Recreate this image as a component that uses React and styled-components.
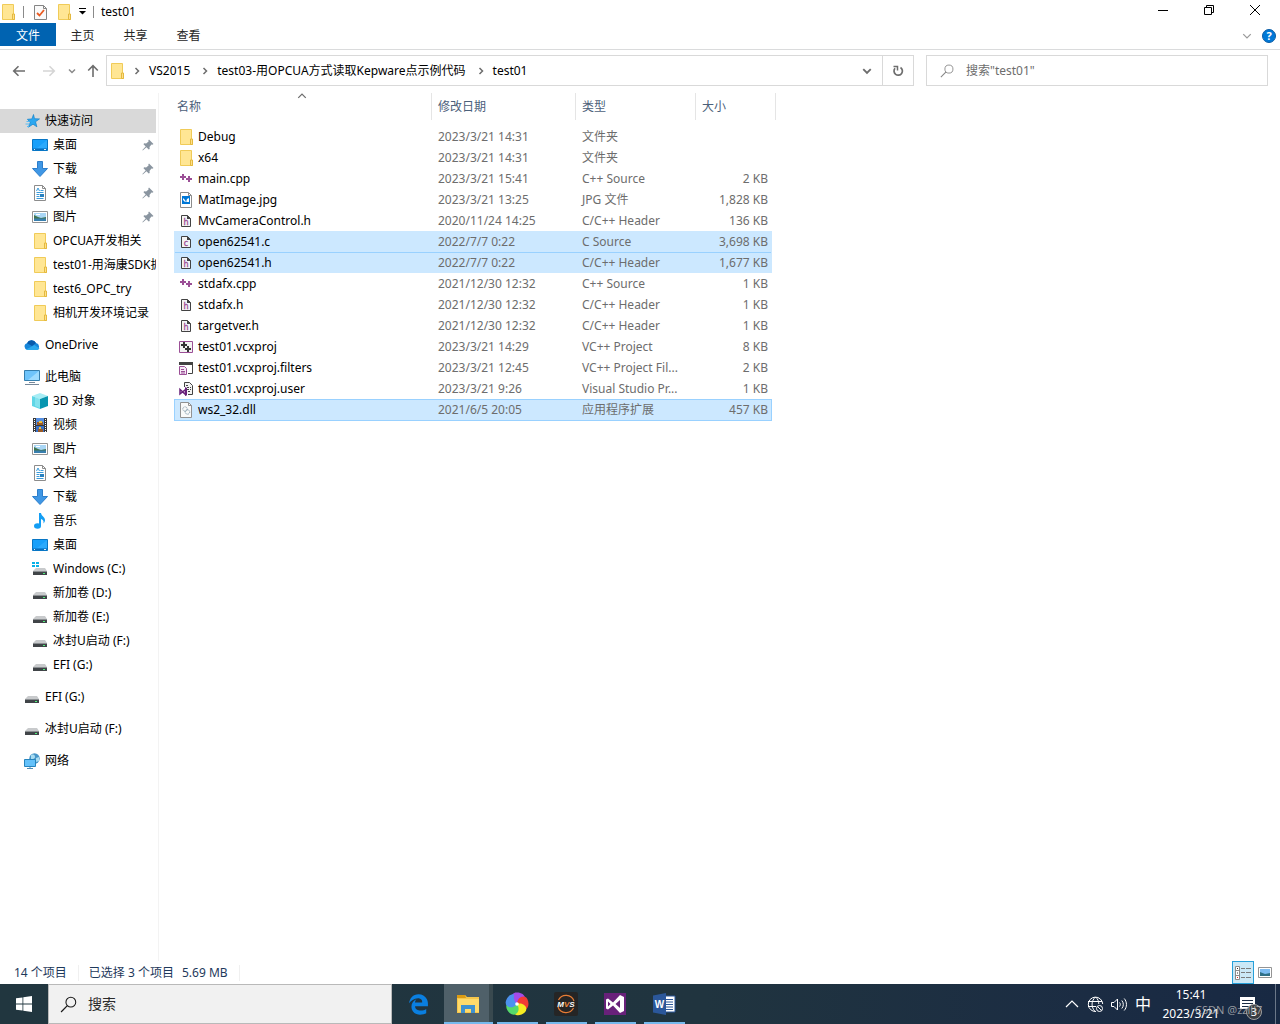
import React, { useState } from "react";
import styled, { createGlobalStyle } from "styled-components";
import { FaEdgeLegacy } from "react-icons/fa6";

const GlobalStyle = createGlobalStyle`
  * {
    box-sizing: border-box;
  }
  body {
    margin: 0;
    background: #fff;
    color: #000;
    font-family: "Noto Sans", "Noto Sans CJK SC", sans-serif;
    font-size: 12px;
    line-height: 16px;
  }
  button, input {
    font: inherit;
    color: inherit;
    background: none;
    border: 0;
    padding: 0;
    margin: 0;
  }
  a {
    color: inherit;
    text-decoration: none;
  }
  svg {
    display: block;
    flex: none;
  }
`;

const Page = styled.div`
  min-height: 100vh;
  display: flex;
  flex-direction: column;
`;

const TitleBar = styled.header`
  height: 23px;
  display: flex;
  align-items: center;
  padding-right: 2px;
`;

const QuickTools = styled.div`
  display: flex;
  align-items: center;
  gap: 7px;
  padding-right: 7px;
`;

const ToolButton = styled.button`
  display: flex;
  align-items: center;
  justify-content: center;
`;

const Divider = styled.span`
  width: 1px;
  height: 12px;
  background: #8a8a8a;
`;

const WindowTitle = styled.h1`
  flex: 1;
  margin: 0;
  font-size: 12px;
  font-weight: 400;
`;

const WindowButton = styled.button`
  width: 46px;
  height: 20px;
  display: flex;
  align-items: center;
  justify-content: center;
  align-self: flex-start;
`;

const Ribbon = styled.nav`
  display: flex;
  height: 27px;
  padding-bottom: 3px;
  border-bottom: 1px solid #dadbdc;
`;

const RibbonTab = styled.button`
  width: ${p => (p.$file ? 56 : 53)}px;
  padding-top: 2px;
  color: ${p => (p.$file ? "#fff" : "#262626")};
  background: ${p => (p.$file ? "#0063b1" : "none")};
`;

const RibbonEnd = styled.div`
  display: flex;
  align-items: center;
  gap: 10px;
  margin-left: auto;
  padding: 2px 4px 0 0;
`;

const AddressRow = styled.div`
  display: flex;
  align-items: center;
  padding: 5px 12px 7px 4px;
`;

const NavButtons = styled.div`
  display: grid;
  grid-template-columns: 30px 30px 16px 26px;
  align-items: center;
`;

const AddressBox = styled.div`
  flex: 1;
  min-width: 0;
  height: 31px;
  display: flex;
  align-items: center;
  border: 1px solid #d9d9d9;
`;

const Crumbs = styled.div`
  flex: 1;
  min-width: 0;
  display: flex;
  align-items: center;
  gap: 8px;
  padding-left: 2px;
  white-space: nowrap;
  overflow: hidden;
  a {
    padding-right: 3px;
  }
`;

const AddressButton = styled.button`
  width: 31px;
  height: 29px;
  display: flex;
  align-items: center;
  justify-content: center;
  border-left: 1px solid ${p => (p.$line ? "#d9d9d9" : "transparent")};
`;

const SearchBox = styled.label`
  width: 342px;
  height: 31px;
  margin-left: 12px;
  padding: 0 13px;
  display: flex;
  align-items: center;
  gap: 12px;
  border: 1px solid #d9d9d9;
  input {
    flex: 1;
    min-width: 0;
    outline: none;
  }
  input::placeholder {
    color: #6d6d6d;
    opacity: 1;
  }
`;

const Body = styled.div`
  flex: 1;
  display: flex;
`;

const Sidebar = styled.nav`
  width: 159px;
  flex: none;
  padding: 16px 2px 0 0;
  border-right: 1px solid #f3f3f3;
`;

const Group = styled.div`
  margin-bottom: 8px;
`;

const SideItem = styled.a`
  display: flex;
  align-items: center;
  gap: 5px;
  height: 24px;
  padding-left: ${p => (p.$child ? 32 : 24)}px;
  padding-right: ${p => (p.$pinned ? 2 : 0)}px;
  background: ${p => (p.$active ? "#d9d9d9" : "none")};
  &:hover {
    background: ${p => (p.$active ? "#d9d9d9" : "#e5f3ff")};
  }
`;

const SideLabel = styled.span`
  flex: 1;
  min-width: 0;
  overflow: hidden;
  white-space: nowrap;
`;

const Content = styled.main`
  flex: 1;
  min-width: 0;
  padding-left: 15px;
`;

const FileTable = styled.table`
  width: 602px;
  table-layout: fixed;
  border-collapse: separate;
  border-spacing: 0;
`;

const HeadCell = styled.th`
  height: 27px;
  padding: 0 6px 0 ${p => (p.$first ? 3 : 6)}px;
  border-right: 1px solid #e5e5e5;
  text-align: left;
  font-weight: 400;
  color: #4c607a;
`;

const SortMark = styled.span`
  position: absolute;
  top: -8px;
  left: 120px;
`;

const HeadButton = styled.button`
  position: relative;
`;

const Spacer = styled.tr`
  height: 6px;
`;

const FileRow = styled.tr`
  height: 21px;
  cursor: default;
  td {
    padding: 0 3px 0 6px;
    color: #6d6d6d;
    white-space: nowrap;
    overflow: hidden;
  }
  td:first-child {
    padding-left: 4px;
    color: #000;
  }
  td:nth-child(4) {
    text-align: right;
  }
  td:not(:last-child) {
    background: ${p => (p.$selected ? "#cce8ff" : "none")};
    box-shadow: ${p =>
      p.$focused
        ? "inset 0 1px #99d1ff, 0 1px #99d1ff"
        : p.$joined
        ? "inset 0 1px #99d1ff"
        : "none"};
  }
  td:first-child {
    border-left: 1px solid ${p => (p.$focused ? "#99d1ff" : "transparent")};
  }
  td:nth-child(4) {
    border-right: 1px solid ${p => (p.$focused ? "#99d1ff" : "transparent")};
  }
`;

const FileName = styled.span`
  display: flex;
  align-items: center;
  gap: 5px;
`;

const FileIcon = styled.span`
  width: 14px;
  display: flex;
  justify-content: center;
`;

const StatusBar = styled.footer`
  height: 23px;
  display: flex;
  align-items: center;
  padding-left: 14px;
  color: #1e395b;
`;

const StatusText = styled.span`
  display: flex;
  gap: 8px;
  padding-right: 11px;
  margin-right: 10px;
  border-right: 1px solid #f0f0f0;
`;

const ViewButtons = styled.div`
  display: flex;
  margin-left: auto;
  padding-right: 4px;
`;

const ViewButton = styled.button`
  width: 22px;
  height: 23px;
  display: flex;
  align-items: center;
  justify-content: center;
  border: 1px solid ${p => (p.$on ? "#26a0da" : "transparent")};
  background: ${p => (p.$on ? "#cbe8f6" : "none")};
`;

const Taskbar = styled.footer`
  height: 40px;
  display: flex;
  background: linear-gradient(90deg, #21363f 0%, #20343f 55%, #1b2c43 85%, #182943 100%);
  color: #fff;
`;

const StartButton = styled.button`
  width: 48px;
  display: flex;
  align-items: center;
  justify-content: center;
`;

const TaskSearch = styled.label`
  width: 344px;
  display: flex;
  align-items: center;
  gap: 11px;
  padding-left: 11px;
  background: #f1f1f1;
  border: 1px solid #b9b9b9;
  color: #1a1a1a;
  font-size: 14px;
  input {
    flex: 1;
    min-width: 0;
    outline: none;
  }
  input::placeholder {
    color: #2b2b2b;
    opacity: 1;
  }
`;

const Apps = styled.div`
  display: flex;
  padding-left: 3px;
`;

const AppButton = styled.button`
  width: 49px;
  padding: 0 ${p => (p.$active ? 0 : 4)}px;
  display: flex;
  flex-direction: column;
  align-items: center;
  background: ${p => (p.$active ? "linear-gradient(90deg, #4f6069 45px, #39494f 45px)" : "none")};
  &::after {
    content: "";
    width: 100%;
    height: 2px;
    background: ${p => (p.$running ? "#76b9ed" : "none")};
  }
`;

const AppIcon = styled.span`
  flex: 1;
  display: flex;
  align-items: center;
  padding: 2px 2px 0 0;
`;

const Tray = styled.div`
  margin-left: auto;
  display: flex;
  align-items: center;
  gap: 7px;
`;

const TrayButton = styled.button`
  position: relative;
  display: flex;
  align-items: center;
  justify-content: center;
  font-size: 16px;
`;

const Clock = styled.button`
  position: relative;
  z-index: 1;
  width: 66px;
  margin-right: 8px;
  line-height: 19px;
  span {
    display: block;
  }
`;

const Watermark = styled.span`
  position: absolute;
  left: 37px;
  bottom: 4px;
  font-size: 11px;
  line-height: 19px;
  color: rgba(190, 190, 190, 0.75);
  white-space: nowrap;
  pointer-events: none;
`;

const Badge = styled.span`
  position: absolute;
  left: 7px;
  top: 8px;
  width: 16px;
  height: 16px;
  border: 1px solid #a0a0a0;
  border-radius: 50%;
  background: #3a3d42;
  font-size: 11px;
  line-height: 14px;
`;

const ShowDesktop = styled.button`
  width: 5px;
  height: 40px;
  margin-left: 12px;
  border-left: 1px solid #6b7788;
`;

const Icon = ({ size = 16, box = 16, children }) => (
  <svg width={size} height={size} viewBox={`0 0 ${box} ${box}`} fill="none" aria-hidden="true">
    {children}
  </svg>
);

const Folder = () => (
  <Icon>
    <path d="M2.500.5h11v11l1 1v3h-12z" fill="#ffe694" stroke="#f0cb58" />
    <path d="M12.500 10v5.500h2V10z" fill="#ffe08a" stroke="#e4b93f" />
  </Icon>
);

const Chevron = ({ dir = "right", color = "#6d6d6d", size = 8, width = 1.5 }) => {
  const paths = { right: "M2.500 1l3 3-3 3", down: "M1 2.500l3 3 3-3", up: "M1 5.500l3-3 3 3" };
  return (
    <Icon size={size} box={8}>
      <path d={paths[dir]} stroke={color} strokeWidth={width} />
    </Icon>
  );
};

const Arrow = ({ dir, color }) => (
  <Icon size={14} box={14}>
    <path
      d={{ left: "M13 7H2M6.500 2.200L1.700 7l4.800 4.800", right: "M1 7h11M7.500 2.200L12.300 7l-4.800 4.800", up: "M7 13V2M2.200 6.500L7 1.700l4.800 4.800" }[dir]}
      stroke={color}
      strokeWidth="1.600"
    />
  </Icon>
);

const Magnifier = ({ size, color }) => (
  <Icon size={size}>
    <circle cx="10.200" cy="5.800" r="4.600" stroke={color} />
    <path d="M6.900 9.100L1 15" stroke={color} strokeWidth="1.200" />
  </Icon>
);

const Star = () => (
  <Icon>
    <path d="M9.500 1.500l1 4.200 5 .2-4 2.900 1.400 5L9 11.200l-4.600 3 1.800-4.800-2.800-3.100 4.500-.4z" fill="#2ca7f0" stroke="#1482ca" strokeWidth=".7" />
    <path d="M2.500 8.500h3M1.500 11h4M3 13.500h2" stroke="#5bbcf4" />
  </Icon>
);

const Desktop = () => (
  <Icon>
    <path d="M.5 2.500h15v11H.5z" fill="#18a0fb" stroke="#0876c5" />
    <path d="M1 11.500h14v1.500H1z" fill="#0b6fbd" />
    <path d="M2 12.500h1M12 12.500h2" stroke="#d9f0ff" />
    <path d="M15 3v8H5z" fill="#39b1ff" opacity=".6" />
  </Icon>
);

const Download = () => (
  <Icon>
    <path d="M5.500.5h5v7h5L8 15.500.5 7.500h5z" fill="#3f97e5" stroke="#2c7ecb" />
  </Icon>
);

const Document = () => (
  <Icon>
    <path d="M2.500.5h8l3 3v12h-11z" fill="#fff" stroke="#8c8c8c" />
    <path d="M10.500.5v3h3" stroke="#8c8c8c" />
    <path d="M4.500 6l1.500-3 1.500 3M8.500 5.500h3M4.500 7.500h7M4.500 9.500h3M4.500 11.500h3M4.500 13.500h7" stroke="#3a9bdb" />
    <path d="M8 9h4v3H8z" fill="#2780bf" />
  </Icon>
);

const Picture = () => (
  <Icon>
    <path d="M.5 2.500h15v11H.5z" fill="#fff" stroke="#949494" />
    <path d="M2 4h12v8H2z" fill="#a9d6f5" />
    <path d="M2 6l4 2 3 1 5-1v2H2z" fill="#417450" />
    <path d="M2 9.500h12V12H2z" fill="#397fae" />
    <path d="M4 5h4v1H4z" fill="#fff" />
  </Icon>
);

const Cloud = () => (
  <Icon>
    <path d="M3.500 13A3.500 3.500 0 0 1 3 6.200 5 5 0 0 1 12 6a3.700 3.700 0 0 1 1 7z" fill="#1686d9" />
    <path d="M3 6.200A5 5 0 0 1 12 6l-4 3z" fill="#075aab" />
    <path d="M2 12.500L10.500 8l5 3.500A3 3 0 0 1 13 13H3.500z" fill="#2aa9ed" />
  </Icon>
);

const Computer = () => (
  <Icon>
    <path d="M.5 1.500h15v10H.5z" fill="#6ec4fb" stroke="#357fae" />
    <path d="M15 2v9H4z" fill="#9cdbff" />
    <path d="M5 13.500h6M1 15.500h14" stroke="#76889a" />
  </Icon>
);

const Cube = () => (
  <Icon>
    <path d="M8 0l8 3-8 3-8-3z" fill="#a8edf5" />
    <path d="M0 3l8 3v10l-8-3z" fill="#5fd6e6" />
    <path d="M16 3L8 6v10l8-3z" fill="#0795af" />
    <path d="M3 2l5-1 5 1.500L8 6v9l-5-2z" fill="#a5edf5" opacity=".5" />
  </Icon>
);

const Film = () => (
  <Icon>
    <path d="M1 1h14v14H1z" fill="#383838" />
    <path d="M4 1h8v7H4z" fill="#568fe2" />
    <path d="M4 9h8v6H4z" fill="#3770c9" />
    <path d="M5 5h6v3H5zM6 12h5v3H6z" fill="#9b5b27" />
    <path d="M7 4h3v2H7zM7 10h2v2H7z" fill="#edc23b" />
    <path d="M2.500 2v13M13.500 2v13" stroke="#fff" strokeDasharray="1 1" />
  </Icon>
);

const Music = () => (
  <Icon>
    <ellipse cx="5.500" cy="13" rx="3.500" ry="2.700" fill="#139ef4" />
    <path d="M7 0h2c.3 3 4 3.800 4 7 0 1.600-.7 2.700-1.500 3.500.5-3-1-4-2.500-4.500v7H7z" fill="#139ef4" />
  </Icon>
);

const Drive = ({ windows }) => (
  <Icon>
    {windows && <path d="M0 1h3v2H0zm4 0h3v2H4zM0 4h3v2H0zm4 0h3v2H4z" fill="#08b1e8" />}
    <path d="M4 7h9l2 3H1z" fill="#c8cacc" />
    <path d="M1 10h14v4H1z" fill="#404448" />
    <path d="M1 10h14v1H1z" fill="#8b8f92" />
    <path d="M11 12h2v1h-2z" fill="#4ff27a" />
  </Icon>
);

const Network = () => (
  <Icon>
    <circle cx="10.500" cy="5.500" r="5.200" fill="#4896c8" />
    <path d="M7 2c3-1 4 0 4 2S8 6 7 8zM12 5l3-1v4l-3 1z" fill="#a8dcf1" />
    <path d="M.5 6.500h11v7H.5z" fill="#63c1fa" stroke="#2684bd" />
    <path d="M6 14v1.500M3 15.500h6" stroke="#4f8db4" />
  </Icon>
);

const Pin = () => (
  <Icon size={12} box={12}>
    <path d="M7 .5L11.500 5l-1.200.7-.9-.3L7.500 8l.2 2-1 .5L4.400 8.200.8 11.500l-.4-.4 3.300-3.600L1.500 5.200l.6-.9 2 .2L6.600 2.600l-.3-1z" fill="#8a95a0" />
  </Icon>
);

const Cpp = () => (
  <Icon size={14} box={14}>
    <path d="M4 2v6M1 5h6M10 4v6M7 7h6" stroke="#9b4f96" strokeWidth="2" />
  </Icon>
);

const Jpg = () => (
  <Icon>
    <path d="M2.500.5h8l3 3v12h-11z" fill="#fff" stroke="#8c8c8c" />
    <path d="M4 4h8v8H4z" fill="#0078d7" />
    <path d="M5 6l2 2 1 2 1-3 2-1v4H9l-1-1-1 1-2-2z" fill="#fff" />
    <path d="M10.500.5v3h3" stroke="#8c8c8c" />
  </Icon>
);

const Source = ({ letter }) => (
  <Icon size={14} box={14}>
    <path d="M2.500 1.500h6l3 3v8h-9z" fill="#f4f4f4" stroke="#424242" />
    <path d="M8 1l4 4H8z" fill="#424242" />
    <text x="7" y="11" textAnchor="middle" fontSize="8" fontFamily="DejaVu Sans" fill="#9b4f96" stroke="#9b4f96" strokeWidth=".3">{letter}</text>
  </Icon>
);

const Project = () => (
  <Icon size={14} box={14}>
    <path d="M.5 1.500h13v11H.5z" fill="#f3f3f3" stroke="#9b4f96" />
    <path d="M5 2v6M2 5h6M9 6v6M6 9h6" stroke="#333" strokeWidth="2" />
  </Icon>
);

const Filters = () => (
  <Icon size={14} box={14}>
    <path d="M0 1h14v3H0z" fill="#424242" />
    <path d="M13.500 4v8.500H9" stroke="#424242" />
    <path d="M.5 5.500h5l2 2v6h-7z" fill="#f5eaf5" stroke="#9b4f96" />
    <path d="M2 8.500h3M2 10.500h4M2 12h4" stroke="#9b4f96" />
  </Icon>
);

const UserFile = () => (
  <Icon size={14} box={14}>
    <path d="M5.500 5V.5h5l3 3v9H9" fill="#f3f3f3" stroke="#424242" />
    <path d="M7 3.500h2M8 5.500h4M8 7.500h4M9 9.500h3" stroke="#424242" strokeDasharray="2 1" />
    <path d="M1 7.500v4.500l5.500-4.500v5z" stroke="#68217a" strokeWidth="1.500" />
    <path d="M6 5l2 1v7l-2 1z" fill="#68217a" />
  </Icon>
);

const Dll = () => (
  <Icon>
    <path d="M2.500.5h8l3 3v12h-11z" fill="#f9f9f9" stroke="#929292" />
    <path d="M10.500.5v3h3" stroke="#929292" />
    <circle cx="7" cy="7" r="2.200" stroke="#8ca0ad" strokeDasharray="1 .5" />
    <circle cx="9.500" cy="10" r="2.200" stroke="#7d98aa" strokeDasharray="1 .5" />
  </Icon>
);

const fileIcons = {
  folder: <Folder />,
  cpp: <Cpp />,
  jpg: <Jpg />,
  h: <Source letter="h" />,
  c: <Source letter="c" />,
  project: <Project />,
  filters: <Filters />,
  user: <UserFile />,
  dll: <Dll />,
};

const files = [
  ["folder", "Debug", "2023/3/21 14:31", "文件夹", ""],
  ["folder", "x64", "2023/3/21 14:31", "文件夹", ""],
  ["cpp", "main.cpp", "2023/3/21 15:41", "C++ Source", "2 KB"],
  ["jpg", "MatImage.jpg", "2023/3/21 13:25", "JPG 文件", "1,828 KB"],
  ["h", "MvCameraControl.h", "2020/11/24 14:25", "C/C++ Header", "136 KB"],
  ["c", "open62541.c", "2022/7/7 0:22", "C Source", "3,698 KB"],
  ["h", "open62541.h", "2022/7/7 0:22", "C/C++ Header", "1,677 KB"],
  ["cpp", "stdafx.cpp", "2021/12/30 12:32", "C++ Source", "1 KB"],
  ["h", "stdafx.h", "2021/12/30 12:32", "C/C++ Header", "1 KB"],
  ["h", "targetver.h", "2021/12/30 12:32", "C/C++ Header", "1 KB"],
  ["project", "test01.vcxproj", "2023/3/21 14:29", "VC++ Project", "8 KB"],
  ["filters", "test01.vcxproj.filters", "2023/3/21 12:45", "VC++ Project Fil...", "2 KB"],
  ["user", "test01.vcxproj.user", "2023/3/21 9:26", "Visual Studio Pr...", "1 KB"],
  ["dll", "ws2_32.dll", "2021/6/5 20:05", "应用程序扩展", "457 KB"],
];

// the first entry of each group is its root, the rest are indented
const groups = [
  [
    [<Star />, "快速访问"],
    [<Desktop />, "桌面", true],
    [<Download />, "下载", true],
    [<Document />, "文档", true],
    [<Picture />, "图片", true],
    [<Folder />, "OPCUA开发相关"],
    [<Folder />, "test01-用海康SDK抓"],
    [<Folder />, "test6_OPC_try"],
    [<Folder />, "相机开发环境记录"],
  ],
  [[<Cloud />, "OneDrive"]],
  [
    [<Computer />, "此电脑"],
    [<Cube />, "3D 对象"],
    [<Film />, "视频"],
    [<Picture />, "图片"],
    [<Document />, "文档"],
    [<Download />, "下载"],
    [<Music />, "音乐"],
    [<Desktop />, "桌面"],
    [<Drive windows />, "Windows (C:)"],
    [<Drive />, "新加卷 (D:)"],
    [<Drive />, "新加卷 (E:)"],
    [<Drive />, "冰封U启动 (F:)"],
    [<Drive />, "EFI (G:)"],
  ],
  [[<Drive />, "EFI (G:)"]],
  [[<Drive />, "冰封U启动 (F:)"]],
  [[<Network />, "网络"]],
];

const ExplorerLogo = () => (
  <Icon size={24} box={24}>
    <path d="M1 3h8l2 2h12v16H1z" fill="#f7c64b" />
    <path d="M1 3h8l1 3H1z" fill="#dc9b13" />
    <path d="M2 7h21v13H2z" fill="#ffda6b" />
    <path d="M5 13h14v8h-4v-4H9v4H5z" fill="#3f91d0" />
  </Icon>
);

const petals = ["#a34bea", "#f23b35", "#f6ec22", "#56d96b", "#4c91ee"];

const Pinwheel = () => (
  <Icon size={24} box={24}>
    {petals.map((color, i) => (
      <path key={color} d="M12 12C6 9 6 1 12 .5c5 0 9 3 9 7-2 0-6 0-9 4.500z" fill={color} transform={`rotate(${i * 72 - 8} 12 12)`} />
    ))}
    <circle cx="12" cy="12" r="1.800" fill="#fff" />
  </Icon>
);

const MvsLogo = () => (
  <Icon size={24} box={24}>
    <rect width="24" height="24" rx="2" fill="#252525" />
    <path d="M4.500 8a8.500 8.500 0 0 1 15.500 1M19.500 16A8.500 8.500 0 0 1 4 15" stroke="#e77c35" strokeWidth="1.200" />
    <text x="12" y="15" textAnchor="middle" fontSize="8" fontStyle="italic" fontWeight="700" fontFamily="Liberation Sans" fill="#fff">
      <tspan fill="#fff">M</tspan><tspan fill="#f08a3c">V</tspan><tspan>S</tspan>
    </text>
  </Icon>
);

const StudioLogo = () => (
  <Icon size={24} box={24}>
    <path d="M1 1h22v22H1z" fill="#68217a" />
    <path d="M3 7.500l2-1 5 4L17 3l4 2v14l-4 2-7-7.500-5 4-2-1zM5 9.500v5L7.500 12zM17 8l-4.500 4 4.500 4z" fill="#fff" fillRule="evenodd" />
  </Icon>
);

const WordLogo = () => (
  <Icon size={24} box={24}>
    <path d="M13 4h10v16H13z" fill="#fff" stroke="#2b579a" />
    <path d="M14 7.500h7M14 10h7M14 12.500h7M14 15h7M14 17.500h7" stroke="#2b579a" />
    <path d="M1 3.500L14 1v22L1 20.500z" fill="#2b579a" />
    <text x="7.500" y="16" textAnchor="middle" fontSize="10" fontWeight="700" fontFamily="Liberation Sans" fill="#fff">W</text>
  </Icon>
);

const apps = [
  ["Edge", <FaEdgeLegacy size={21} color="#0a7fe0" />, false],
  ["文件资源管理器", <ExplorerLogo />, true],
  ["浏览器", <Pinwheel />, true],
  ["MVS", <MvsLogo />, true],
  ["Visual Studio", <StudioLogo />, true],
  ["Word", <WordLogo />, true],
];

export default function App() {
  const [selected, setSelected] = useState([5, 6, 13]);
  const [focused, setFocused] = useState(13);

  const pick = i => {
    setSelected([i]);
    setFocused(i);
  };

  return (
    <Page>
      <GlobalStyle />
      <TitleBar>
        <QuickTools>
          <ToolButton aria-label="窗口菜单"><Folder /></ToolButton>
          <Divider />
          <ToolButton aria-label="属性">
            <Icon size={18} box={18}>
              <path d="M3.500 2.500h9l3 3v11h-12z" fill="#fafafa" stroke="#858585" />
              <path d="M12.500 2.500v3h3" stroke="#858585" />
              <path d="M6 10l2.500 2.500L13 7" stroke="#ea5b22" strokeWidth="1.800" />
            </Icon>
          </ToolButton>
          <ToolButton aria-label="新建文件夹"><Folder /></ToolButton>
          <ToolButton aria-label="自定义快速访问工具栏">
            <Icon size={7} box={7}><path d="M0 .5h7" stroke="#000" /><path d="M0 3h7L3.500 6.500z" fill="#000" /></Icon>
          </ToolButton>
          <Divider />
        </QuickTools>
        <WindowTitle>test01</WindowTitle>
        <WindowButton aria-label="最小化"><Icon size={10} box={10}><path d="M0 5.500h10" stroke="#000" /></Icon></WindowButton>
        <WindowButton aria-label="还原">
          <Icon size={10} box={10}><path d="M.5 2.500h7v7h-7zM2.500 2.500v-2h7v7h-2" stroke="#000" /></Icon>
        </WindowButton>
        <WindowButton aria-label="关闭"><Icon size={10} box={10}><path d="M0 0l10 10M10 0L0 10" stroke="#000" /></Icon></WindowButton>
      </TitleBar>

      <Ribbon>
        <RibbonTab $file>文件</RibbonTab>
        <RibbonTab>主页</RibbonTab>
        <RibbonTab>共享</RibbonTab>
        <RibbonTab>查看</RibbonTab>
        <RibbonEnd>
          <ToolButton aria-label="展开功能区"><Chevron dir="down" color="#9a9a9a" size={10} width={1} /></ToolButton>
          <ToolButton aria-label="帮助">
            <Icon size={14} box={14}>
              <circle cx="7" cy="7" r="6.500" fill="#0078d7" stroke="#0c5da5" />
              <text x="7" y="11" textAnchor="middle" fontSize="11" fontWeight="700" fill="#fff">?</text>
            </Icon>
          </ToolButton>
        </RibbonEnd>
      </Ribbon>

      <AddressRow>
        <NavButtons>
          <ToolButton aria-label="后退"><Arrow dir="left" color="#6d6d6d" /></ToolButton>
          <ToolButton aria-label="前进" disabled><Arrow dir="right" color="#d5d5d5" /></ToolButton>
          <ToolButton aria-label="最近浏览的位置"><Chevron dir="down" color="#8a8a8a" /></ToolButton>
          <ToolButton aria-label="上移"><Arrow dir="up" color="#6d6d6d" /></ToolButton>
        </NavButtons>
        <AddressBox>
          <Crumbs>
            <Folder />
            <Chevron />
            <a href="#vs2015">VS2015</a>
            <Chevron />
            <a href="#test03">test03-用OPCUA方式读取Kepware点示例代码</a>
            <Chevron />
            <a href="#test01">test01</a>
          </Crumbs>
          <AddressButton aria-label="以前的位置"><Chevron dir="down" size={10} width={1.5} /></AddressButton>
          <AddressButton $line aria-label="刷新">
            <Icon size={12} box={12}>
              <path d="M8.500 2.500A4.200 4.200 0 1 1 3 3.300" stroke="#6d6d6d" strokeWidth="1.700" />
              <path d="M1.500 1.500h4v4" stroke="#6d6d6d" strokeWidth="1.500" />
            </Icon>
          </AddressButton>
        </AddressBox>
        <SearchBox>
          <Magnifier size={14} color="#868686" />
          <input type="text" aria-label="搜索 test01" placeholder={'搜索"test01"'} />
        </SearchBox>
      </AddressRow>

      <Body>
        <Sidebar>
          {groups.map((items, g) => (
            <Group key={g}>
              {items.map(([icon, label, pinned], i) => (
                <SideItem key={label} href={`#g${g}-${i}`} $child={i > 0} $pinned={pinned} $active={g === 0 && i === 0}>
                  {icon}
                  <SideLabel>{label}</SideLabel>
                  {pinned && <Pin />}
                </SideItem>
              ))}
            </Group>
          ))}
        </Sidebar>
        <Content>
          <FileTable>
            <colgroup>
              <col style={{ width: 258 }} />
              <col style={{ width: 144 }} />
              <col style={{ width: 120 }} />
              <col style={{ width: 76 }} />
              <col style={{ width: 4 }} />
            </colgroup>
            <thead>
              <tr>
                <HeadCell $first>
                  <HeadButton>
                    名称
                    <SortMark><Chevron dir="up" size={10} width={1} /></SortMark>
                  </HeadButton>
                </HeadCell>
                <HeadCell><HeadButton>修改日期</HeadButton></HeadCell>
                <HeadCell><HeadButton>类型</HeadButton></HeadCell>
                <HeadCell colSpan={2}><HeadButton>大小</HeadButton></HeadCell>
              </tr>
            </thead>
            <tbody>
              <Spacer aria-hidden="true" />
              {files.map(([kind, name, date, type, size], i) => (
                <FileRow
                  key={name}
                  $selected={selected.includes(i)}
                  $joined={selected.includes(i) && selected.includes(i - 1)}
                  $focused={focused === i}
                  onClick={() => pick(i)}
                >
                  <td><FileName><FileIcon>{fileIcons[kind]}</FileIcon>{name}</FileName></td>
                  <td>{date}</td>
                  <td>{type}</td>
                  <td>{size}</td>
                  <td />
                </FileRow>
              ))}
            </tbody>
          </FileTable>
        </Content>
      </Body>

      <StatusBar>
        <StatusText>14 个项目</StatusText>
        <StatusText>
          <span>已选择 3 个项目</span>
          <span>5.69 MB</span>
        </StatusText>
        <ViewButtons>
          <ViewButton $on aria-label="详细信息">
            <Icon>
              <path d="M.5 1.500h4v13h-4zM.5 5.500h4M.5 10.500h4" fill="#fff" stroke="#8a8a8a" />
              <path d="M2 3.500h1M2 8h1" stroke="#333" />
              <path d="M2 12.500h1" stroke="#d22" />
              <path d="M6 3.500h4M11 3.500h5M6 7.500h4M11 7.500h5M6 12.500h4M11 12.500h5" stroke="#7b7b7b" />
            </Icon>
          </ViewButton>
          <ViewButton aria-label="大缩略图">
            <Icon size={14} box={14}>
              <path d="M.5 1.500h13v10H.5z" fill="#fff" stroke="#949494" />
              <path d="M2 3h10v7H2z" fill="#7dbcf2" />
              <path d="M2 6l5 2 5-1v3H2z" fill="#2f6f86" />
            </Icon>
          </ViewButton>
        </ViewButtons>
      </StatusBar>

      <Taskbar>
        <StartButton aria-label="开始">
          <Icon><path d="M0 2.300L6.500 1.400v6.100H0zM7.300 1.300L16 0v7.500H7.300zM0 8.400h6.500v6.200L0 13.700zM7.300 8.400H16V16l-8.700-1.300z" fill="#fff" /></Icon>
        </StartButton>
        <TaskSearch>
          <Magnifier size={17} color="#1a1a1a" />
          <input type="text" aria-label="搜索" placeholder="搜索" />
        </TaskSearch>
        <Apps>
          {apps.map(([name, icon, running], i) => (
            <AppButton key={name} aria-label={name} $running={running} $active={i === 1}>
              <AppIcon>{icon}</AppIcon>
            </AppButton>
          ))}
        </Apps>
        <Tray>
          <TrayButton aria-label="显示隐藏的图标"><Chevron dir="up" color="#fff" size={16} width={0.6} /></TrayButton>
          <TrayButton aria-label="网络">
            <Icon size={17} box={17}>
              <path d="M9 15.500A7.200 7.200 0 1 1 15.700 8M1 5.500h14M1 10.500h8M8.500 1C4 5 4 11 8 15.500M8.500 1c2.500 2 3.300 4.500 3.300 7" stroke="#fff" />
              <circle cx="12.500" cy="12.500" r="3" stroke="#fff" />
              <path d="M10.500 10.500l4 4" stroke="#fff" />
            </Icon>
          </TrayButton>
          <TrayButton aria-label="音量">
            <Icon size={17} box={17}>
              <path d="M.5 6.500h2.500l3.500-3.500v11L3 10.500H.5zM8.500 6.500c1 1 1 3 0 4M10.800 4.500c2 2 2 6 0 8M13.200 2.500c3 3.200 3 8.800 0 12" stroke="#fff" />
            </Icon>
          </TrayButton>
          <TrayButton aria-label="输入法">中</TrayButton>
          <Clock>
            <span>15:41</span>
            <span>2023/3/21</span>
            <Watermark>CSDN @zzlll7</Watermark>
          </Clock>
          <TrayButton aria-label="通知">
            <Icon size={17} box={17}>
              <path d="M1 1h15v12h-4v3l-3-3H1z" fill="#fff" />
              <path d="M3 4.500h11M3 7.500h11M3 10.500h7" stroke="#1b2c43" />
            </Icon>
            <Badge>3</Badge>
          </TrayButton>
          <ShowDesktop aria-label="显示桌面" />
        </Tray>
      </Taskbar>
    </Page>
  );
}
